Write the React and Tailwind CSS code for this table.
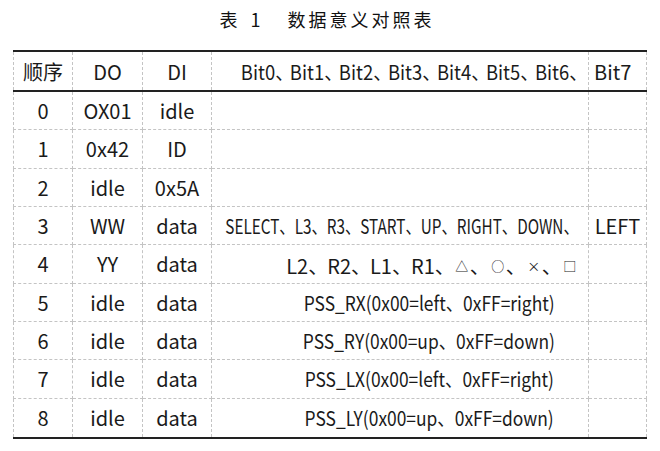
import React from "react";

const FONT = { fontFamily: '"Noto Sans CJK SC", "Noto Sans", sans-serif' };

const COLS = "grid grid-cols-[60px_70px_69px_377px_58px]";
const DASH = "border-dashed border-[#c4c4c4]";

function BitsHeader() {
  const items = ["Bit0", "Bit1", "Bit2", "Bit3", "Bit4", "Bit5", "Bit6"];
  return (
    <span className="whitespace-nowrap inline-block scale-x-[0.92] origin-right">
      {items.map((b) => (
        <React.Fragment key={b}>
          <span>{b}</span>
          <span className="tracking-[-4px]">、</span>
        </React.Fragment>
      ))}
    </span>
  );
}

function Row4() {
  const a = ["L2", "R2", "L1", "R1"];
  const s = ["△", "○", "×", "□"];
  return (
    <span className="whitespace-nowrap inline-flex items-center">
      {a.map((x) => (
        <React.Fragment key={x}>
          <span>{x}</span>
          <span className="tracking-[-1px]">、</span>
        </React.Fragment>
      ))}
      {s.map((x, i) => (
        <React.Fragment key={x}>
          <span className="inline-block w-[16px] text-center text-[13px] leading-none">{x}</span>
          {i < 3 && <span>、</span>}
        </React.Fragment>
      ))}
    </span>
  );
}

const rows = [
  ["0", "OX01", "idle", "", ""],
  ["1", "0x42", "ID", "", ""],
  ["2", "idle", "0x5A", "", ""],
  ["3", "WW", "data", "r3", "LEFT"],
  ["4", "YY", "data", "r4", ""],
  ["5", "idle", "data", "PSS_RX(0x00=left、0xFF=right)", ""],
  ["6", "idle", "data", "PSS_RY(0x00=up、0xFF=down)", ""],
  ["7", "idle", "data", "PSS_LX(0x00=left、0xFF=right)", ""],
  ["8", "idle", "data", "PSS_LY(0x00=up、0xFF=down)", ""],
];

function BitsCell({ v }) {
  if (v === "") return null;
  if (v === "r3") {
    return (
      <div className="flex w-full justify-center pl-[4px]">
        <span className="whitespace-nowrap inline-block scale-x-[0.765] text-[20px]">
          SELECT、L3、R3、START、UP、RIGHT、DOWN、
        </span>
      </div>
    );
  }
  if (v === "r4") {
    return (
      <div className="flex w-full justify-center pl-[64px] pt-[4px]">
        <Row4 />
      </div>
    );
  }
  return (
    <div className="flex w-full justify-center pl-[58px] pt-[1px]">
      <span className="whitespace-nowrap inline-block scale-x-[0.87]">{v}</span>
    </div>
  );
}

export default function App() {
  return (
    <div className="w-[660px] h-[451px] bg-white text-[#1a1a1a]" style={FONT}>
      <div className="h-[50px] pt-[9px] flex justify-center">
        <div className="text-[18px] leading-[20px] font-normal text-[#111] whitespace-nowrap pr-[6px]">
          <span>表</span>
          <span className="ml-[13px]">1</span>
          <span className="ml-[27px] tracking-[3px]">数据意义对照表</span>
        </div>
      </div>
      <div className="ml-[13px] w-[634px]">
        <div className="h-[2px] bg-[#222]" />
        <div className={`${COLS} h-[38px] text-[20px]`}>
          <div className={`flex items-center justify-center border-l border-r ${DASH} pt-[2px]`}>顺序</div>
          <div className={`flex items-center justify-center border-r ${DASH} pt-[2px]`}>DO</div>
          <div className={`flex items-center justify-center border-r ${DASH} pt-[2px]`}>DI</div>
          <div className={`flex items-center justify-end pr-[4px] border-r ${DASH} pt-[2px]`}>
            <BitsHeader />
          </div>
          <div className={`flex items-center justify-start pl-[5px] border-r ${DASH} pt-[2px]`}>Bit7</div>
        </div>
        <div className="h-[2px] bg-[#222]" />
        <div className="grid grid-rows-[repeat(9,minmax(0,1fr))] h-[345px] text-[20px]">
          {rows.map((r, i) => {
            const bb = i < 8 ? "border-b" : "";
            return (
              <div key={i} className={COLS}>
                <div className={`flex items-center justify-center border-l border-r ${bb} ${DASH} pt-[1px]`}>{r[0]}</div>
                <div className={`flex items-center justify-center border-r ${bb} ${DASH} pt-[1px]`}>{r[1]}</div>
                <div className={`flex items-center justify-center border-r ${bb} ${DASH} pt-[1px]`}>{r[2]}</div>
                <div className={`flex items-center border-r ${bb} ${DASH}`}>
                  <BitsCell v={r[3]} />
                </div>
                <div className={`flex items-center justify-center border-r ${bb} ${DASH} pt-[1px]`}>{r[4]}</div>
              </div>
            );
          })}
        </div>
        <div className="h-[2px] bg-[#222]" />
      </div>
    </div>
  );
}
